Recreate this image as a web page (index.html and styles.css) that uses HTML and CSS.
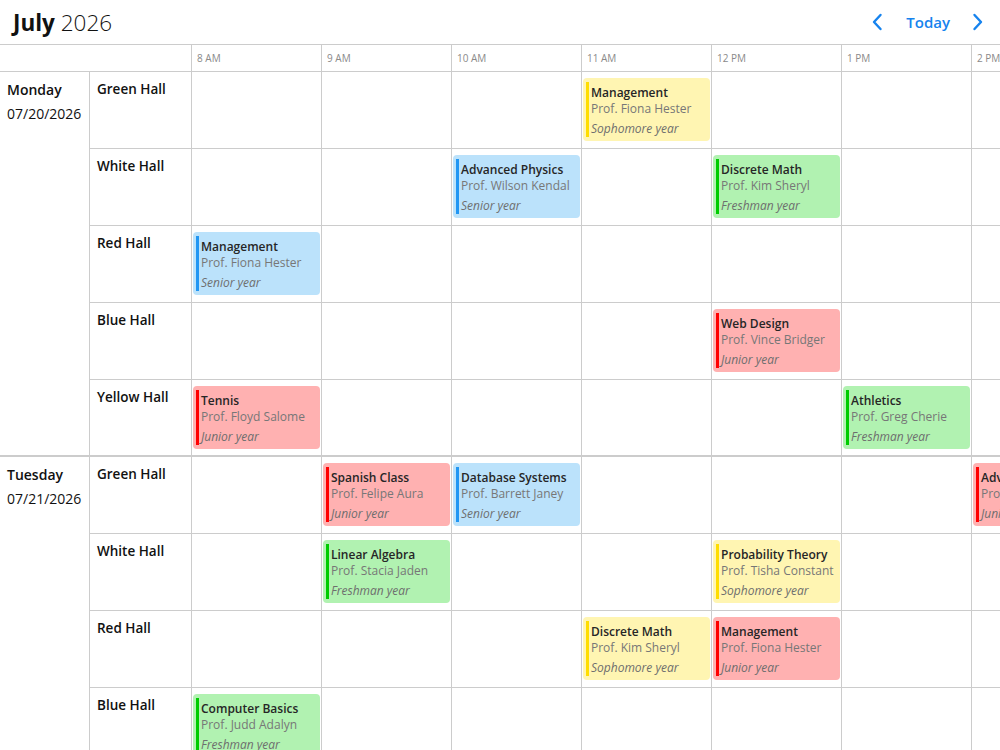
FILE: index.html
```html
<!DOCTYPE html>
<html lang="en">
<head>
<meta charset="utf-8">
<title>Timeline</title>
<link rel="stylesheet" href="styles.css">
</head>
<body>
<div class="app">
  <header class="toolbar">
    <div class="title"><b>July</b> <span class="year">2026</span></div>
    <div class="nav">
      <button class="arrow" aria-label="Previous">
        <svg width="12" height="18" viewBox="0 0 12 18"><path d="M9.5 2 L3 9 L9.5 16" fill="none" stroke="#1683ee" stroke-width="2.4" stroke-linecap="round" stroke-linejoin="round"/></svg>
      </button>
      <button class="today">Today</button>
      <button class="arrow" aria-label="Next">
        <svg width="12" height="18" viewBox="0 0 12 18"><path d="M2.5 2 L9 9 L2.5 16" fill="none" stroke="#1683ee" stroke-width="2.4" stroke-linecap="round" stroke-linejoin="round"/></svg>
      </button>
    </div>
  </header>

  <div class="times">
    <div class="corner"></div>
    <div class="hour">8 AM</div>
    <div class="hour">9 AM</div>
    <div class="hour">10 AM</div>
    <div class="hour">11 AM</div>
    <div class="hour">12 PM</div>
    <div class="hour">1 PM</div>
    <div class="hour">2 PM</div>
  </div>

  <section class="day">
    <div class="date"><div class="weekday">Monday</div><div class="dnum">07/20/2026</div></div>

    <div class="room">Green Hall</div>
    <div class="slot"></div><div class="slot"></div><div class="slot"></div>
    <div class="slot"><div class="event yellow"><div class="inner"><div class="ev-title">Management</div><div class="ev-prof">Prof. Fiona Hester</div><div class="ev-year">Sophomore year</div></div></div></div>
    <div class="slot"></div><div class="slot"></div><div class="slot"></div>

    <div class="room">White Hall</div>
    <div class="slot"></div><div class="slot"></div>
    <div class="slot"><div class="event blue"><div class="inner"><div class="ev-title">Advanced Physics</div><div class="ev-prof">Prof. Wilson Kendal</div><div class="ev-year">Senior year</div></div></div></div>
    <div class="slot"></div>
    <div class="slot"><div class="event green"><div class="inner"><div class="ev-title">Discrete Math</div><div class="ev-prof">Prof. Kim Sheryl</div><div class="ev-year">Freshman year</div></div></div></div>
    <div class="slot"></div><div class="slot"></div>

    <div class="room">Red Hall</div>
    <div class="slot"><div class="event blue"><div class="inner"><div class="ev-title">Management</div><div class="ev-prof">Prof. Fiona Hester</div><div class="ev-year">Senior year</div></div></div></div>
    <div class="slot"></div><div class="slot"></div><div class="slot"></div><div class="slot"></div><div class="slot"></div><div class="slot"></div>

    <div class="room">Blue Hall</div>
    <div class="slot"></div><div class="slot"></div><div class="slot"></div><div class="slot"></div>
    <div class="slot"><div class="event red"><div class="inner"><div class="ev-title">Web Design</div><div class="ev-prof">Prof. Vince Bridger</div><div class="ev-year">Junior year</div></div></div></div>
    <div class="slot"></div><div class="slot"></div>

    <div class="room end">Yellow Hall</div>
    <div class="slot end"><div class="event red"><div class="inner"><div class="ev-title">Tennis</div><div class="ev-prof">Prof. Floyd Salome</div><div class="ev-year">Junior year</div></div></div></div>
    <div class="slot end"></div><div class="slot end"></div><div class="slot end"></div><div class="slot end"></div>
    <div class="slot end"><div class="event green"><div class="inner"><div class="ev-title">Athletics</div><div class="ev-prof">Prof. Greg Cherie</div><div class="ev-year">Freshman year</div></div></div></div>
    <div class="slot end"></div>
  </section>

  <section class="day">
    <div class="date"><div class="weekday">Tuesday</div><div class="dnum">07/21/2026</div></div>

    <div class="room">Green Hall</div>
    <div class="slot"></div>
    <div class="slot"><div class="event red"><div class="inner"><div class="ev-title">Spanish Class</div><div class="ev-prof">Prof. Felipe Aura</div><div class="ev-year">Junior year</div></div></div></div>
    <div class="slot"><div class="event blue"><div class="inner"><div class="ev-title">Database Systems</div><div class="ev-prof">Prof. Barrett Janey</div><div class="ev-year">Senior year</div></div></div></div>
    <div class="slot"></div><div class="slot"></div><div class="slot"></div>
    <div class="slot"><div class="event red"><div class="inner"><div class="ev-title">Advanced Physics</div><div class="ev-prof">Prof. Wilson Kendal</div><div class="ev-year">Junior year</div></div></div></div>

    <div class="room">White Hall</div>
    <div class="slot"></div>
    <div class="slot"><div class="event green"><div class="inner"><div class="ev-title">Linear Algebra</div><div class="ev-prof">Prof. Stacia Jaden</div><div class="ev-year">Freshman year</div></div></div></div>
    <div class="slot"></div><div class="slot"></div>
    <div class="slot"><div class="event yellow"><div class="inner"><div class="ev-title">Probability Theory</div><div class="ev-prof">Prof. Tisha Constant</div><div class="ev-year">Sophomore year</div></div></div></div>
    <div class="slot"></div><div class="slot"></div>

    <div class="room">Red Hall</div>
    <div class="slot"></div><div class="slot"></div><div class="slot"></div>
    <div class="slot"><div class="event yellow"><div class="inner"><div class="ev-title">Discrete Math</div><div class="ev-prof">Prof. Kim Sheryl</div><div class="ev-year">Sophomore year</div></div></div></div>
    <div class="slot"><div class="event red"><div class="inner"><div class="ev-title">Management</div><div class="ev-prof">Prof. Fiona Hester</div><div class="ev-year">Junior year</div></div></div></div>
    <div class="slot"></div><div class="slot"></div>

    <div class="room">Blue Hall</div>
    <div class="slot"><div class="event green"><div class="inner"><div class="ev-title">Computer Basics</div><div class="ev-prof">Prof. Judd Adalyn</div><div class="ev-year">Freshman year</div></div></div></div>
    <div class="slot"></div><div class="slot"></div><div class="slot"></div><div class="slot"></div><div class="slot"></div><div class="slot"></div>

    <div class="room end">Yellow Hall</div>
    <div class="slot end"></div><div class="slot end"></div><div class="slot end"></div><div class="slot end"></div><div class="slot end"></div><div class="slot end"></div><div class="slot end"></div>
  </section>
</div>
</body>
</html>
```

FILE: styles.css
```css
* { box-sizing: border-box; }

html, body {
  margin: 0;
  padding: 0;
  width: 1000px;
  height: 750px;
  overflow: hidden;
  background: #fff;
}

body {
  font-family: "Open Sans", "Noto Sans", sans-serif;
  color: #111;
}

.app {
  width: 1101px;
}

.toolbar {
  width: 1000px;
  height: 45px;
  border-bottom: 1px solid #ccc;
  display: flex;
  align-items: center;
  justify-content: space-between;
  padding: 0 16px 0 13px;
}

.title {
  font-size: 22.5px;
  line-height: 1;
  color: #111;
  margin-top: 2px;
}
.title b { font-weight: 700; }
.title .year { font-weight: 300; }

.nav {
  display: flex;
  align-items: center;
}

.nav button {
  background: none;
  border: 0;
  padding: 0;
  margin: 0;
  font-family: inherit;
  cursor: pointer;
  display: flex;
  align-items: center;
}

.arrow { width: 12px; height: 18px; }

.today {
  font-size: 15px;
  font-weight: 600;
  color: #1683ee;
  margin: 0 22px 0 23px !important;
}

.times {
  display: grid;
  grid-template-columns: 192px repeat(7, 130px);
  height: 27px;
  border-bottom: 1px solid #ccc;
}

.corner { border-right: 1px solid #ccc; }

.hour {
  border-right: 1px solid #ccc;
  font-size: 10px;
  color: #8a8a8a;
  padding: 6px 0 0 5px;
  line-height: 14px;
}

.day {
  display: grid;
  grid-template-columns: 90px 102px repeat(7, 130px);
  grid-template-rows: repeat(4, 77px) 75px;
  border-bottom: 2px solid #ccc;
}

.date {
  grid-row: 1 / span 5;
  border-right: 1px solid #ccc;
  padding: 8px 0 0 7px;
  font-size: 14px;
}
.weekday { font-weight: 600; line-height: 20px; }
.dnum { line-height: 20px; margin-top: 4px; }

.room {
  border-right: 1px solid #ccc;
  border-bottom: 1px solid #ccc;
  font-size: 13.5px;
  font-weight: 600;
  padding: 8px 0 0 7px;
  line-height: 19px;
}

.slot {
  border-right: 1px solid #ccc;
  border-bottom: 1px solid #ccc;
  padding: 6px 1px 0 1px;
}

.room.end, .slot.end { border-bottom: 0; }

.event {
  height: 63px;
  border-radius: 4px;
  padding: 4px 4px 4px 3px;
  overflow: hidden;
  white-space: nowrap;
}

.inner {
  height: 100%;
  border-left: 3px solid;
  padding: 3px 0 0 2px;
  font-size: 12px;
  line-height: 16px;
}

.ev-title { color: #262626; font-weight: 600; }
.ev-prof { color: #777; }
.ev-year { color: #6e6e6e; font-style: italic; margin-top: 4px; }

.blue { background: #bbe2fb; }
.blue .inner { border-color: #2196f3; }
.red { background: #ffb1b1; }
.red .inner { border-color: #ff0000; }
.yellow { background: #fff5b2; }
.yellow .inner { border-color: #ffdd00; }
.green { background: #b1f2b1; }
.green .inner { border-color: #00cc00; }
```
